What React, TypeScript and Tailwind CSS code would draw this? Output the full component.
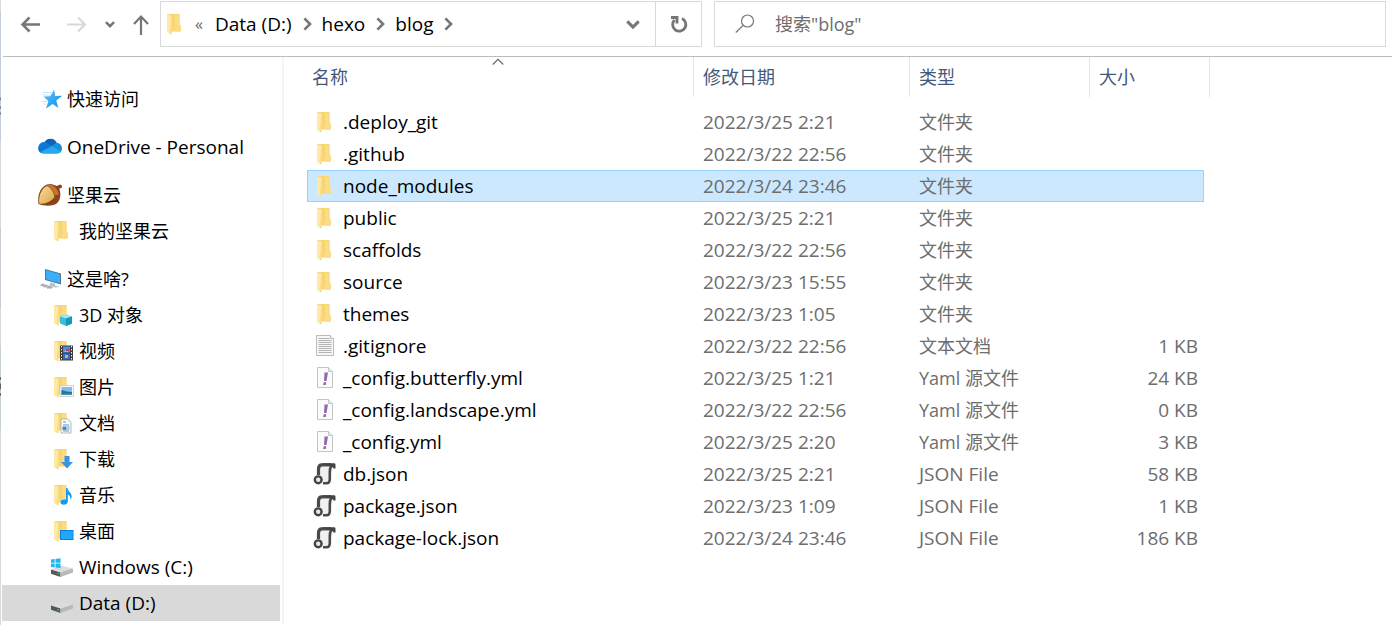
import { type ReactNode } from "react";

function Folder({ children, className = "" }: { children?: ReactNode; className?: string }) {
  return (
    <svg viewBox="0 0 24 24" className={"size-6 shrink-0 " + className} aria-hidden="true">
      <path d="M4 2h12.500v11l1.500 1v5.500H7z" fill="#f6d576" />
      <path d="M12 3h4.500v10l1.500 1v5.500h-6z" fill="#fbdc80" />
      <path d="M4 2l4.500 1.800V22.500L4 20z" fill="#ffe9a6" />
      <path d="M8.500 3.800V22.500L6.500 21.500" fill="#fadc80" />
      {children}
    </svg>
  );
}

function Star() {
  return (
    <svg viewBox="0 0 24 24" className="size-6 shrink-0" aria-hidden="true">
      <defs>
        <linearGradient id="star" x1="0" y1="0" x2="1" y2="1">
          <stop offset="0" stopColor="#5fc2fb" />
          <stop offset="1" stopColor="#0d8fe8" />
        </linearGradient>
      </defs>
      <path d="M5 5.500h9M5 8h8M4 14.500h5M5 17h3" stroke="#bfe5fb" strokeWidth="1" />
      <path d="M16 2.500l1.200 6.500 7-.2-6 4.600 2 7.400-5.500-3.700-6.700 4.400 2.400-7.200L5.500 9.600l7-.3z" fill="url(#star)" />
    </svg>
  );
}

function Cloud() {
  return (
    <svg viewBox="0 0 24 24" className="size-6 shrink-0" aria-hidden="true">
      <path d="M6 8.500A6.800 6.800 0 0 1 18.800 8L12 13z" fill="#0a64b8" />
      <path d="M0 13a6 6 0 0 1 8-5.600L17 13 2.500 18A6 6 0 0 1 0 13z" fill="#0f78d4" />
      <path d="M13.500 11l5.200-3.300A5.600 5.600 0 0 1 24 13.500c0 2-1 3.500-2 4.200z" fill="#1490df" />
      <path d="M2 17.200L14 11l9 5.700a5 5 0 0 1-4 2H6a6 6 0 0 1-4-1.500z" fill="#28a8ea" />
    </svg>
  );
}

function Acorn() {
  return (
    <svg viewBox="0 0 24 24" className="size-6 shrink-0" aria-hidden="true">
      <defs>
        <linearGradient id="acorn" x1="0" y1="0" x2="1" y2="1">
          <stop offset="0" stopColor="#f9dd9b" />
          <stop offset="1" stopColor="#dda449" />
        </linearGradient>
      </defs>
      <path d="M0.500 21C-.5 14 1 5 9 1.500l4-.5 6 2 3-1.500 2 1-.3 2.500-2.500.5C23.500 11 22.500 18 18 21c-5 2.500-12 2-17.500 0z" fill="#8a4319" />
      <path d="M11 1.500c5 .5 9 5 10 10l-4 1C15 8 12.500 4 9 2.500z" fill="#c07530" />
      <path d="M1.300 20.500C.5 14 2.500 6 9 3c4 2 6.500 6 7.500 11-3.500 4.500-9 7.500-15.200 6.500z" fill="url(#acorn)" />
    </svg>
  );
}

function Screen() {
  return (
    <svg viewBox="0 0 24 24" className="size-6 shrink-0" aria-hidden="true">
      <path d="M7 2l16 4.500v11L7 13z" fill="#4d7795" />
      <path d="M8 3.200l14 4v9L8 12.200z" fill="#38aefc" />
      <path d="M12 15.500l5 1v2l5 1.500-4.500.500-6-1.700z" fill="#b9c2ca" />
      <path d="M4.500 16.500L16 20l-4 2.300L1.500 18.500z" fill="#c6cdd3" />
      <path d="M3.500 17.500l10.500 3.300M6 16.900l-3 1.900M9 17.900l-3.500 2.300M12.500 19l-3.500 2.500" stroke="#8e99a3" strokeWidth=".7" />
    </svg>
  );
}

function Drive({ system = false }: { system?: boolean }) {
  return (
    <svg viewBox="0 0 24 24" className="size-6 shrink-0" aria-hidden="true">
      <path d="M1 14.500l10-4 12 3-9.500 4.500z" fill="#dcdde0" />
      <path d="M1 14.500l9.500 3V22L1 18.800z" fill="#55585a" />
      <path d="M10.500 17.500L23 13.500v4L10.500 22z" fill="#b7b9bc" />
      <path d="M7.500 18l1.500.5v1.200l-1.500-.5z" fill="#35e04c" />
      {system && <path d="M1 4.500l3.700-.5v3.800H1zM5.500 3.900l5-.7v4.600h-5zM1 8.600h3.700V12.500L1 12zM5.500 8.600h5v4.500l-5-.6z" fill="#1fb8f2" />}
    </svg>
  );
}

const overlays: Record<string, ReactNode> = {
  cube: (
    <>
      <path d="M10 13.500l6-2 6 2v7L16 23l-6-2.500z" fill="#39bcd6" />
      <path d="M10 13.500l6-2 6 2-6 2z" fill="#9be8f4" />
      <path d="M16 15.500l6-2v7L16 23z" fill="#1399b9" />
    </>
  ),
  film: (
    <>
      <path d="M10 6.500h13v15H10z" fill="#3b3c40" />
      <path d="M13 7.500h7v6h-7z" fill="#4c8ce2" />
      <path d="M13 14.500h7v6h-7z" fill="#316ac8" />
      <path d="M14 13l2-3 3 3zM15 16h3v3h-3z" fill="#e5ad37" />
      <path d="M16 10h3v2h-3z" fill="#cb3932" />
      <path d="M11.500 7v14M21.500 7v14" stroke="#e8e8e8" strokeWidth="1" strokeDasharray="1.500 1.500" />
    </>
  ),
  photo: (
    <>
      <path d="M10 10.500h13.500v11H10z" fill="#f7f9fb" stroke="#b9c1c9" strokeWidth=".7" />
      <path d="M11.500 12h10.500v8H11.500z" fill="#7dbdf0" />
      <path d="M11.500 15l5 1.500 5.500.5v3H11.500z" fill="#2b7080" />
      <path d="M11.500 18.500H22V20H11.500z" fill="#438bc0" />
    </>
  ),
  document: (
    <>
      <path d="M11 8h7l3 3v11H11z" fill="#fafcfe" stroke="#9caab8" strokeWidth=".8" />
      <path d="M13 11h3M13 14h6M13 20h6M17 16h2.500M17 18h2.500" stroke="#5b9bd2" />
      <path d="M12.500 15.500h4V19h-4z" fill="#4c88bd" />
      <path d="M18 8v3h3" fill="#d6dfe8" />
    </>
  ),
  download: <path d="M14.500 9h5v6H23L17 21.500 11 15h3.500z" fill="#3594e4" />,
  music: (
    <path d="M16 5h1.500c.2 3.500 4.500 4.500 4.200 9l-1.200 3c0-3.300-1-5-2.700-5.500V18c0 5-7.300 4.500-7.300 1.500 0-3 3.500-3.500 5.500-2.500z" fill="#149cf2" />
  ),
  desktop: (
    <>
      <path d="M10 11h13.500v10H10z" fill="#0879cf" />
      <path d="M10.800 11.800h12v8.400h-12z" fill="#22a6fa" />
    </>
  ),
};

function TextFile() {
  return (
    <svg viewBox="0 0 24 24" className="size-6 shrink-0" aria-hidden="true">
      <path d="M3.500 1.500h14l3 3v17h-17z" fill="#f6f6f6" stroke="#bcbcbc" />
      <path d="M5.500 4.500h11M5.500 6.500h13M5.500 8.500h13M5.500 10.500h13M5.500 12.500h13M5.500 14.500h13M5.500 16.500h13M5.500 18.500h13" stroke="#b4b4b4" />
      <path d="M17.500 1.500v3h3" fill="#fff" stroke="#bcbcbc" />
    </svg>
  );
}

function YamlFile() {
  return (
    <svg viewBox="0 0 24 24" className="size-6 shrink-0" aria-hidden="true">
      <path d="M4.500 1.500h11l4 4v16h-15z" fill="#fbfbfc" stroke="#c4c4c4" />
      <path d="M15.500 1.500v4h4" fill="#eee" stroke="#c4c4c4" />
      <path d="M11.500 6.500h3.500l-1.500 8.500h-2.500zM10.700 16.300h2.600l-.5 2.700h-2.600z" fill="#9068b0" />
    </svg>
  );
}

function JsonFile() {
  return (
    <svg viewBox="0 0 24 24" className="size-6 shrink-0" aria-hidden="true">
      <path d="M6 5h10v15H8z" fill="#f0f0f0" />
      <path d="M5.500 13V7c0-3 1-4.200 3.500-4.200h9" fill="none" stroke="#4a4a4a" strokeWidth="3.200" />
      <path d="M8 1.200h13c1 0 1.500.7 1.500 1.700v3.500h-2l-.7-1.200H17c0-1.500-.5-2-1.500-2z" fill="#444" />
      <path d="M18 4.500c-.9 1.500-1.200 3-1.200 6V17c0 3-1 4.200-3.300 4.200H10" fill="none" stroke="#4a4a4a" strokeWidth="2.600" />
      <circle cx="5.200" cy="17.800" r="3.400" fill="#e8e8e8" stroke="#444" strokeWidth="2.400" />
    </svg>
  );
}

function Chevron({ className, d, w = 3 }: { className: string; d: string; w?: number }) {
  return (
    <svg viewBox="0 0 16 16" className={"shrink-0 " + className} fill="none" stroke="currentColor" strokeWidth={w} aria-hidden="true">
      <path d={d} />
    </svg>
  );
}
const RIGHT = "M5 1.500l6.500 6.500L5 14.500";
const DOWN = "M1.500 5L8 11.500 14.500 5";

type Place = { label: string; icon: ReactNode; gap?: boolean; child?: boolean; active?: boolean; latin?: boolean };
const places: Place[] = [
  { label: "快速访问", icon: <Star /> },
  { label: "OneDrive - Personal", icon: <Cloud />, gap: true, latin: true },
  { label: "坚果云", icon: <Acorn />, gap: true },
  { label: "我的坚果云", icon: <Folder />, child: true },
  { label: "这是啥?", icon: <Screen />, gap: true },
  { label: "3D 对象", icon: <Folder>{overlays.cube}</Folder>, child: true },
  { label: "视频", icon: <Folder>{overlays.film}</Folder>, child: true },
  { label: "图片", icon: <Folder>{overlays.photo}</Folder>, child: true },
  { label: "文档", icon: <Folder>{overlays.document}</Folder>, child: true },
  { label: "下载", icon: <Folder>{overlays.download}</Folder>, child: true },
  { label: "音乐", icon: <Folder>{overlays.music}</Folder>, child: true },
  { label: "桌面", icon: <Folder>{overlays.desktop}</Folder>, child: true },
  { label: "Windows (C:)", icon: <Drive system />, child: true, latin: true },
  { label: "Data (D:)", icon: <Drive />, child: true, active: true, latin: true },
];

type Entry = { name: string; date: string; kind: "folder" | "text" | "yaml" | "json"; size?: string; selected?: boolean };
const kinds = {
  folder: { label: "文件夹", icon: <Folder />, latin: false },
  text: { label: "文本文档", icon: <TextFile />, latin: false },
  yaml: { label: "Yaml 源文件", icon: <YamlFile />, latin: false },
  json: { label: "JSON File", icon: <JsonFile />, latin: true },
};
const entries: Entry[] = [
  { name: ".deploy_git", date: "2022/3/25 2:21", kind: "folder" },
  { name: ".github", date: "2022/3/22 22:56", kind: "folder" },
  { name: "node_modules", date: "2022/3/24 23:46", kind: "folder", selected: true },
  { name: "public", date: "2022/3/25 2:21", kind: "folder" },
  { name: "scaffolds", date: "2022/3/22 22:56", kind: "folder" },
  { name: "source", date: "2022/3/23 15:55", kind: "folder" },
  { name: "themes", date: "2022/3/23 1:05", kind: "folder" },
  { name: ".gitignore", date: "2022/3/22 22:56", kind: "text", size: "1 KB" },
  { name: "_config.butterfly.yml", date: "2022/3/25 1:21", kind: "yaml", size: "24 KB" },
  { name: "_config.landscape.yml", date: "2022/3/22 22:56", kind: "yaml", size: "0 KB" },
  { name: "_config.yml", date: "2022/3/25 2:20", kind: "yaml", size: "3 KB" },
  { name: "db.json", date: "2022/3/25 2:21", kind: "json", size: "58 KB" },
  { name: "package.json", date: "2022/3/23 1:09", kind: "json", size: "1 KB" },
  { name: "package-lock.json", date: "2022/3/24 23:46", kind: "json", size: "186 KB" },
];

export default function App() {
  return (
    <div className="flex min-h-screen bg-white font-['Open_Sans','Noto_Sans_CJK_SC',sans-serif] text-[18px] leading-6 text-black">
      <div className="w-px shrink-0 bg-[linear-gradient(#dcdcdc_11px,#c4cedb_12px_97px,#7b8593_98px_100px,#c4cedb_101px_106px,#6c7684_107px_108px,#c4cedb_109px_112px,#6c7684_113px_114px,#c4cedb_115px_141px,#d9d9d9_142px_227px,#c6cdd4_228px_308px,#d9d9d9_309px_345px,#c5d0d4_346px_377px,#444_378px_379px,#c5d0d4_380px_383px,#666_384px_389px,#c5d0d4_390px_393px,#444_394px_395px,#c5d0d4_396px_430px,#d9d9d9_431px)]" />
      <div className="flex min-w-0 grow flex-col">
        <header className="ml-0.5 flex h-[57px] shrink-0 items-start border-b border-[#bcbcbc] pt-px pr-1.5">
          <nav className="flex h-[46px] w-[157px] shrink-0 items-center text-[#767676]" aria-label="导航">
            <button aria-label="后退" className="ml-4 size-6">
              <svg viewBox="0 0 24 24" className="size-6" fill="none" stroke="currentColor" strokeWidth="2.500"><path d="M21 12.500H3M10.500 5.500l-7 7 7 7" /></svg>
            </button>
            <button aria-label="前进" className="ml-[22px] size-6 text-[#d9d9d9]">
              <svg viewBox="0 0 24 24" className="size-6" fill="none" stroke="currentColor" strokeWidth="2.200"><path d="M2 12.500h18M13 5.500l7 7-7 7" /></svg>
            </button>
            <button aria-label="最近浏览的位置" className="ml-4">
              <Chevron className="size-2.5" d={DOWN} w={4} />
            </button>
            <button aria-label="上移" className="ml-3.5 size-6">
              <svg viewBox="0 0 24 24" className="size-6" fill="none" stroke="currentColor" strokeWidth="2.200"><path d="M12 23V5M5 12l7-7.500L19 12" /></svg>
            </button>
          </nav>
          <div className="flex h-[46px] w-[542px] items-center border border-[#d9d9d9]">
            <Folder className="ml-0.5" />
            <div className="ml-2 flex grow items-center text-[19px]">
              <span className="w-5 text-[16px] text-[#666]">«</span>
              <a href="#data">Data (D:)</a>
              <Chevron className="mx-2 size-3.5 text-[#767676]" d={RIGHT} />
              <a href="#hexo">hexo</a>
              <Chevron className="mx-2 size-3.5 text-[#767676]" d={RIGHT} />
              <a href="#blog">blog</a>
              <Chevron className="mx-2 size-3.5 text-[#767676]" d={RIGHT} />
            </div>
            <button aria-label="以前的位置" className="flex h-full w-[46px] items-center justify-center border-r border-[#d9d9d9] text-[#767676]">
              <Chevron className="size-3.5" d={DOWN} w={3.5} />
            </button>
            <button aria-label="刷新" className="flex h-full w-[45px] items-center justify-center text-[#767676]">
              <svg viewBox="0 0 20 20" className="size-5" fill="none" stroke="currentColor" strokeWidth="2.800"><path d="M13 4.600A6.600 6.600 0 1 1 5.500 6M2 3.500h6v6" /></svg>
            </button>
          </div>
          <label className="ml-3 flex h-[46px] grow items-center border border-[#d9d9d9] pl-5 text-[#777]">
            <svg viewBox="0 0 20 20" className="size-5 shrink-0" fill="none" stroke="currentColor" strokeWidth="1.200"><circle cx="12.500" cy="7" r="6" /><path d="M8 11.500L.8 18.500" /></svg>
            <input aria-label="搜索" placeholder={'搜索"blog"'} className="ml-5 min-w-0 grow outline-none placeholder:text-[#6d6d6d]" />
          </label>
        </header>

        <div className="flex grow">
          <aside className="flex w-[283px] shrink-0 flex-col border-r-2 border-[#f5f5f5] pt-6 pr-0.5 pl-px">
            {places.map((p) => (
              <a
                key={p.label}
                href="#place"
                className={`flex h-9 shrink-0 items-center gap-[5px] ${p.gap ? "mt-3" : ""} ${p.child ? "pl-12" : "pl-9"} ${p.active ? "bg-[#d9d9d9]" : ""} ${p.latin ? "text-[19px]" : ""}`}
              >
                {p.icon}
                <span>{p.label}</span>
              </a>
            ))}
          </aside>

          <main className="min-w-0 grow pl-[23px]">
            <table className="w-[903px] table-fixed border-separate border-spacing-0 text-left">
              <colgroup>
                <col className="w-[387px]" />
                <col className="w-[216px]" />
                <col className="w-[180px]" />
                <col className="w-[114px]" />
                <col className="w-1.5" />
              </colgroup>
              <thead>
                <tr className="h-10 text-[#44597a]">
                  {["名称", "修改日期", "类型", "大小"].map((h, i) => (
                    <th
                      key={h}
                      colSpan={i === 3 ? 2 : 1}
                      className={`relative border-r border-[#e5e5e5] p-0 font-normal ${i === 0 ? "pl-[5px]" : "pl-[9px]"}`}
                    >
                      {h}
                      {i === 0 && <Chevron className="absolute top-0 left-1/2 size-3 -translate-x-2 text-[#666]" d="M1 10l7-7 7 7" w={1.5} />}
                    </th>
                  ))}
                </tr>
              </thead>
              <tbody className="text-[#6d6d6d] before:block before:h-[9px]">
                {entries.map((e) => {
                  const cell = e.selected ? "border-y border-[#99d1ff] bg-[#cce8ff]" : "border-transparent";
                  return (
                    <tr key={e.name} className="h-8">
                      <td className={`border-l p-0 text-[19px] text-black ${cell}`}>
                        <span className="flex items-center gap-1.5 pl-[5px]">
                          {kinds[e.kind].icon}
                          {e.name}
                        </span>
                      </td>
                      <td className={`p-0 pl-[9px] text-[19px] ${cell}`}>{e.date}</td>
                      <td className={`p-0 pl-[9px] ${kinds[e.kind].latin ? "text-[19px]" : ""} ${cell}`}>{kinds[e.kind].label}</td>
                      <td className={`border-r p-0 pr-[5px] text-right text-[19px] ${cell}`}>{e.size}</td>
                    </tr>
                  );
                })}
              </tbody>
            </table>
          </main>
        </div>
      </div>
    </div>
  );
}
